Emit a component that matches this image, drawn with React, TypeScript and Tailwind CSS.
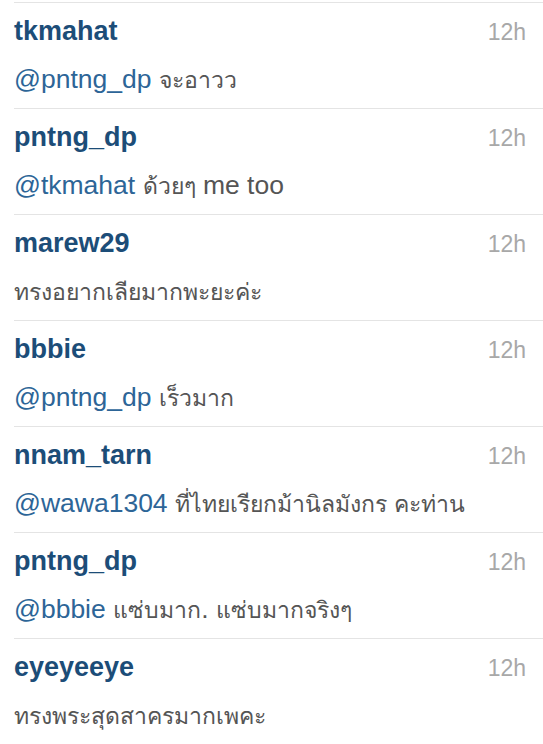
const comments = [
  { user: "tkmahat", mention: "@pntng_dp", text: "จะอาวว" },
  { user: "pntng_dp", mention: "@tkmahat", text: "ด้วยๆ me too" },
  { user: "marew29", mention: "", text: "ทรงอยากเลียมากพะยะค่ะ" },
  { user: "bbbie", mention: "@pntng_dp", text: "เร็วมาก" },
  { user: "nnam_tarn", mention: "@wawa1304", text: "ที่ไทยเรียกม้านิลมังกร คะท่าน" },
  { user: "pntng_dp", mention: "@bbbie", text: "แซ่บมาก. แซ่บมากจริงๆ" },
  { user: "eyeyeeye", mention: "", text: "ทรงพระสุดสาครมากเพคะ" },
];

// Thai runs render smaller than latin text in the original
function CommentText({ text }: { text: string }) {
  const parts = text.split(/([\u0E00-\u0E7F]+)/).filter(Boolean);
  return (
    <>
      {parts.map((p, i) =>
        /[\u0E00-\u0E7F]/.test(p) ? (
          <span key={i} className="text-[23px]">
            {p}
          </span>
        ) : (
          <span key={i}>{p}</span>
        )
      )}
    </>
  );
}

export default function App() {
  return (
    <main
      className="min-h-screen bg-white pt-[2px] overflow-hidden"
      style={{ fontFamily: '"Liberation Sans", "Noto Sans", "DejaVu Sans", sans-serif' }}
    >
      {comments.map((c, i) => (
        <div
          key={i}
          className="ml-[14px] h-[106px] border-t border-[#e4e4e4] pt-[12px] pr-[17px]"
        >
          <div className="flex items-baseline justify-between">
            <span className="text-[27px] leading-[32px] font-bold text-[#1c4d78]">
              {c.user}
            </span>
            <span className="text-[23px] leading-[32px] text-[#a8a8a8]">12h</span>
          </div>
          <p className="mt-[15px] text-[26.5px] leading-[32px] whitespace-nowrap text-[#555555]">
            {c.mention && <span className="text-[#2d6597]">{c.mention} </span>}
            <CommentText text={c.text} />
          </p>
        </div>
      ))}
    </main>
  );
}
